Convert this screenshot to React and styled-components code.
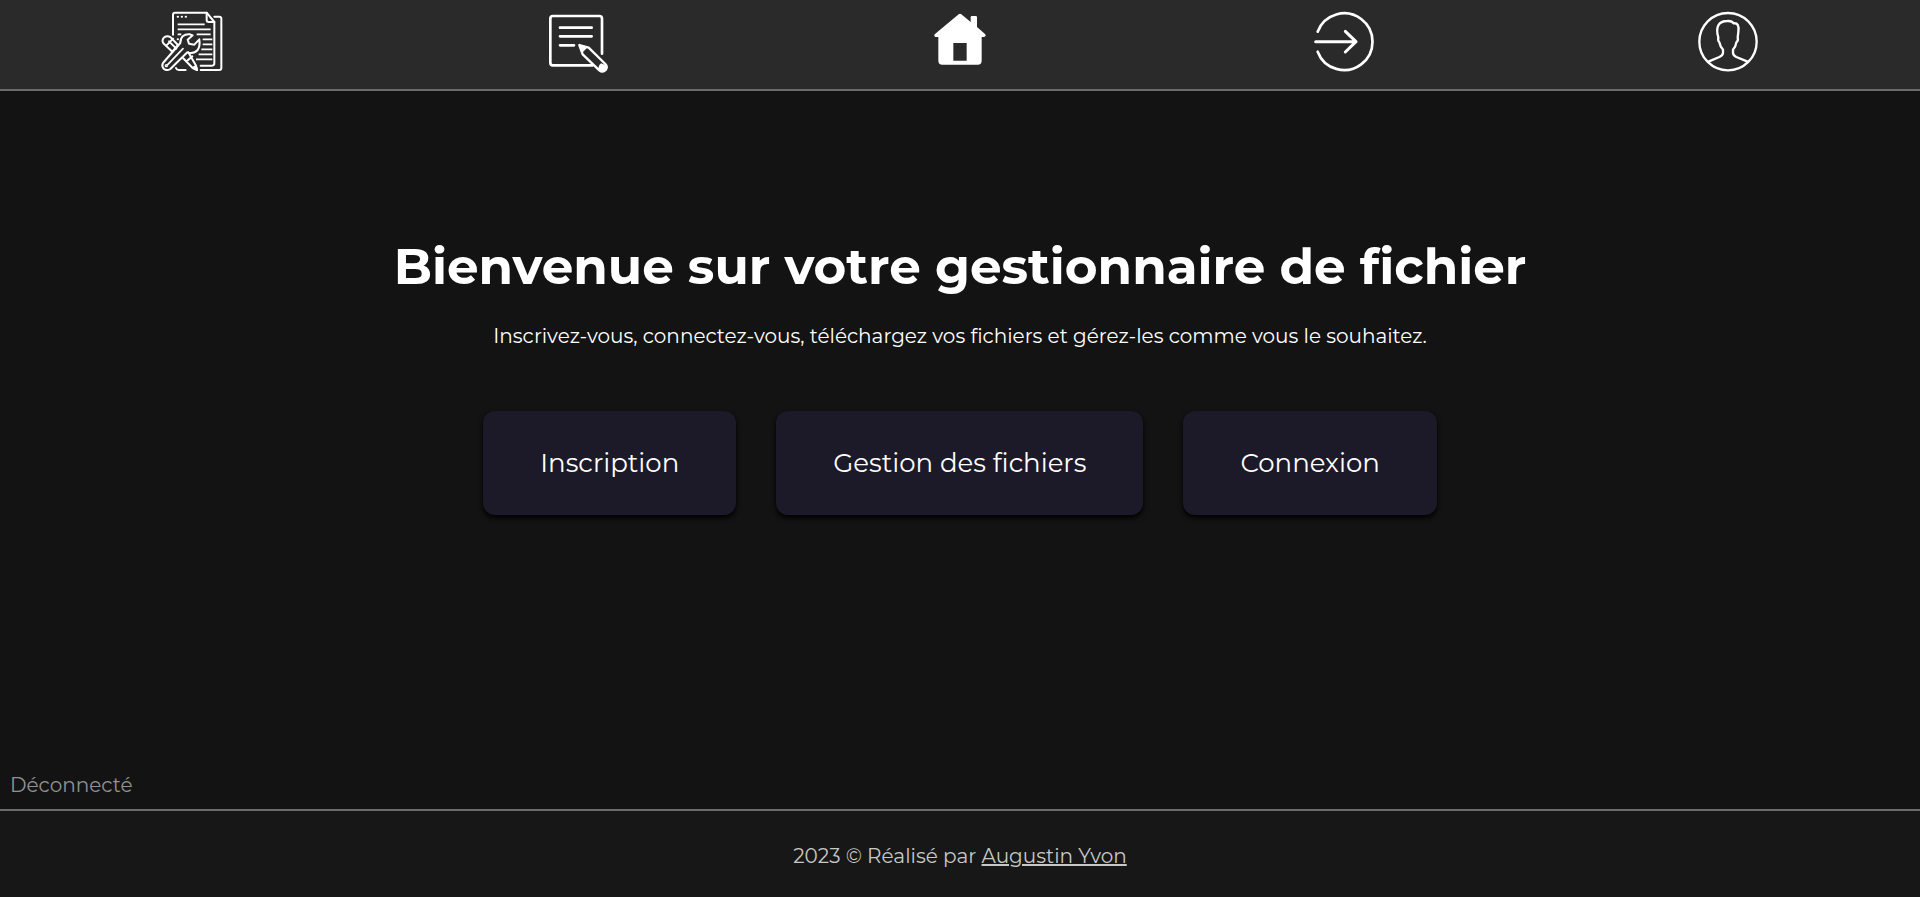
import React from "react";
import styled, { createGlobalStyle } from "styled-components";

const GlobalStyle = createGlobalStyle`
  * { box-sizing: border-box; }
  body {
    margin: 0;
    background: #131313;
    color: #fff;
    font-family: Montserrat, Inter, "Open Sans", sans-serif;
    font-size: 20px;
    line-height: 24px;
  }
`;

const Page = styled.div`
  min-height: 100vh;
  display: flex;
  flex-direction: column;
`;

const NavBar = styled.nav`
  display: grid;
  grid-template-columns: repeat(5, 1fr);
  background: #2a2a2a;
  border-bottom: 2px solid #6b6b6b;
`;

const NavLink = styled.a`
  display: flex;
  justify-content: center;
  padding-bottom: 1px;
  color: #fff;
`;

const Icon = styled.svg`
  display: block;
  width: 84px;
  height: 88px;
  fill: none;
  stroke: currentColor;
  stroke-linecap: round;
  stroke-linejoin: round;
`;

const Main = styled.main`
  flex: 1;
  display: flex;
  flex-direction: column;
  align-items: center;
  padding-top: 145px;
  text-align: center;
`;

const Title = styled.h1`
  margin: 0;
  font-size: 50px;
  line-height: 62px;
  font-weight: 700;
`;

const Lead = styled.p`
  margin: 26px 0 63px;
  font-size: 20px;
`;

const Actions = styled.div`
  display: flex;
  flex-wrap: wrap;
  justify-content: center;
  gap: 40px;
`;

const ActionButton = styled.button`
  padding: 36px 57px;
  border: 0;
  border-radius: 12px;
  background: #1c1929;
  box-shadow: 0 3px 5px #000;
  color: #fff;
  font: inherit;
  font-size: 26px;
  line-height: 32px;
  cursor: pointer;
`;

const Status = styled.p`
  margin: 0;
  padding: 0 10px 12px;
  color: #929292;
`;

const Footer = styled.footer`
  padding: 33px 20px 29px;
  border-top: 2px solid #6b6b6b;
  background: #171717;
  color: #c8c8c8;
  text-align: center;
`;

const AuthorLink = styled.a`
  color: inherit;
  text-decoration: underline;
`;

const ToolsIcon = () => (
  <Icon viewBox="0 0 252 264" strokeWidth="6" aria-hidden="true">
    <path d="M69 104V44q0-6 6-6H170L193 66V190q0 7-7 7H152" />
    <path d="M170 38V60q0 6 6 6H193M193 50H208q6 0 6 6V204q0 6-6 6H152M78 204q2 6 8 6H107" />
    <path d="M83 50h1M95 50h1M107 50h1M83 118h1" />
    <path d="M83 73H164M83 88H182M83 103H94M140 103H182M158 118H187M158 133H187M154 148H187M146 163H187M138 178H187" strokeWidth="5" strokeLinecap="butt" />
    <path d="M40 130Q34 120 43 112Q52 105 62 112L84 135L67 155ZM49 137L69 116M57 124L79 146M99 174L128 204L141 210L137 195L115 157M110 184L127 169" />
    <path d="M120 103Q91 101 91 129L39 189Q34 198 41 206Q50 214 61 207L112 157Q131 163 143 150Q151 138 148 118L133 134L117 131L113 119L128 106Z" />
    <path d="M53 194L99 146" strokeWidth="5" />
    <circle cx="49" cy="197" r="3" strokeWidth="4" />
    <path d="M130 203L141 210L138 198Z" fill="currentColor" />
  </Icon>
);

const NoteIcon = () => (
  <Icon viewBox="-6 0 252 264" strokeWidth="8" aria-hidden="true">
    <path d="M198 161V56q0-8-8-8H51q-8 0-8 8V188q0 8 8 8H170" />
    <path d="M72 83H167M72 109H167M72 136H114" />
    <path d="M130 135L158 143L208 192Q216 201 209 210Q200 219 190 211L140 163Z" strokeWidth="7" />
    <path d="M130 135L152 142L138 156ZM192 196L196 192L211 198L208 211L199 215L188 208Z" fill="currentColor" strokeWidth="4" />
  </Icon>
);

const HomeIcon = () => (
  <Icon viewBox="0 0 252 264" aria-hidden="true">
    <path
      d="M122 43Q126 40 130 43L158 66V52Q158 48 162 48H173Q177 48 177 52V81L201 102Q205 106 202 109Q200 111 196 111H191V182Q191 194 179 194H73Q61 194 61 182V111H54Q50 111 49 107Q48 104 51 102ZM106 129V182H146V129Z"
      fill="currentColor"
      fillRule="evenodd"
      stroke="none"
    />
  </Icon>
);

const LoginIcon = () => (
  <Icon viewBox="6 0 252 264" strokeWidth="8" aria-hidden="true">
    <path d="M53 95A85 85 0 1 1 53 155" />
    <path d="M47 125H168M136 94L168 125L136 156" strokeWidth="9" />
  </Icon>
);

const ProfileIcon = () => (
  <Icon viewBox="0 0 252 264" strokeWidth="7" aria-hidden="true">
    <circle cx="126" cy="125" r="86" />
    <path d="M69 184L100 171Q111 166 111 158V149Q103 142 100 127Q95 123 97 112Q90 89 97 76Q104 63 124 63Q138 62 143 70Q161 68 157 96L155 112Q158 121 151 127Q149 141 141 149V158Q141 166 151 171L183 184" />
  </Icon>
);

const navItems = [
  { label: "Gestion des fichiers", Glyph: ToolsIcon },
  { label: "Inscription", Glyph: NoteIcon },
  { label: "Accueil", Glyph: HomeIcon },
  { label: "Connexion", Glyph: LoginIcon },
  { label: "Profil", Glyph: ProfileIcon },
];

const actions = ["Inscription", "Gestion des fichiers", "Connexion"];

export default function App() {
  return (
    <Page>
      <GlobalStyle />
      <NavBar>
        {navItems.map(({ label, Glyph }) => (
          <NavLink key={label} href="#" aria-label={label}>
            <Glyph />
          </NavLink>
        ))}
      </NavBar>
      <Main>
        <Title>Bienvenue sur votre gestionnaire de fichier</Title>
        <Lead>
          Inscrivez-vous, connectez-vous, téléchargez vos fichiers et gérez-les
          comme vous le souhaitez.
        </Lead>
        <Actions>
          {actions.map((label) => (
            <ActionButton key={label} type="button">
              {label}
            </ActionButton>
          ))}
        </Actions>
      </Main>
      <Status>Déconnecté</Status>
      <Footer>
        2023 © Réalisé par <AuthorLink href="#">Augustin Yvon</AuthorLink>
      </Footer>
    </Page>
  );
}
